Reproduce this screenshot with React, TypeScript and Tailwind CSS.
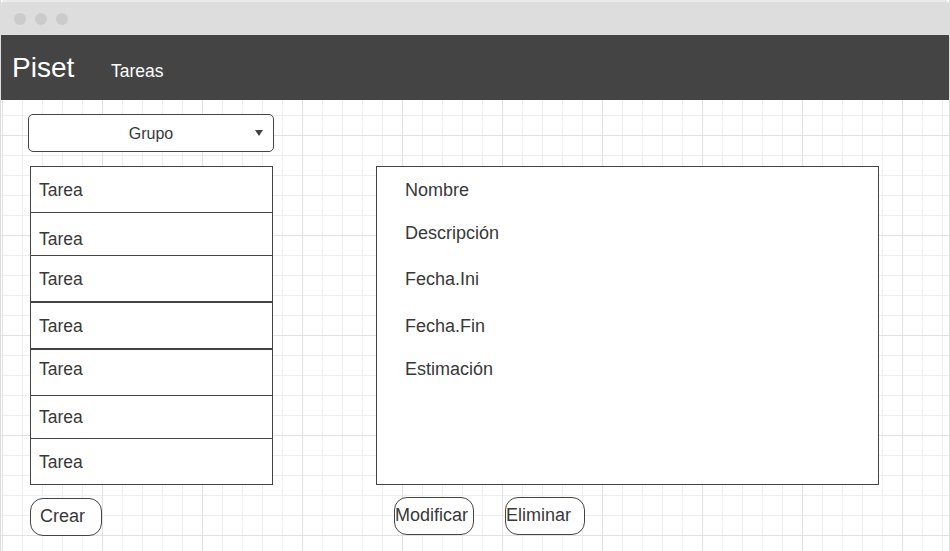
import { ChevronDown } from "lucide-react";

const rows = [
  { h: "h-[45px]", b: "", pad: "" },
  { h: "h-[43px]", b: "border-t", pad: "pt-[9px]" },
  { h: "h-[46px]", b: "border-t", pad: "" },
  { h: "h-[47px]", b: "border-t-2", pad: "" },
  { h: "h-[47px]", b: "border-t-2", pad: "pb-[8px]" },
  { h: "h-[43px]", b: "border-t", pad: "" },
  { h: "h-[46px]", b: "border-t", pad: "" },
];

const fields = [
  { label: "Nombre", mt: "mt-0" },
  { label: "Descripción", mt: "mt-[23px]" },
  { label: "Fecha.Ini", mt: "mt-[26px]" },
  { label: "Fecha.Fin", mt: "mt-[27px]" },
  { label: "Estimación", mt: "mt-[23px]" },
];

function WindowBar() {
  return (
    <div className="flex h-[35px] items-center gap-[9px] rounded-t-[4px] border-t-2 border-[#ebebeb] bg-[#dddddd] pl-[13px]">
      <span className="h-[12px] w-[12px] rounded-full bg-[#cbcbcb]" />
      <span className="h-[12px] w-[12px] rounded-full bg-[#cbcbcb]" />
      <span className="h-[12px] w-[12px] rounded-full bg-[#cbcbcb]" />
    </div>
  );
}

function Header() {
  return (
    <header className="flex h-[65px] items-center bg-[#444444] pl-[11px] text-white">
      <div className="flex items-baseline">
        <span className="inline-block w-[99px] text-[28px] leading-[32px]">Piset</span>
        <span className="text-[17.5px] leading-[20px]">Tareas</span>
      </div>
    </header>
  );
}

function GroupSelect() {
  return (
    <div className="relative flex h-[38px] w-[246px] items-center justify-center rounded-[5px] border border-[#444] bg-white pt-[2px]">
      <span className="text-[16px] leading-[18px] text-[#383838]">Grupo</span>
      {/* caret drawn as a small triangle */}
      <svg className="absolute right-[10px] top-[15px]" width="8" height="6" viewBox="0 0 8 6" aria-hidden>
        <path d="M0 0 H8 L4 6 Z" fill="#444" />
      </svg>
      <ChevronDown className="hidden" />
    </div>
  );
}

function TaskList() {
  return (
    <div className="ml-[2px] mt-[14px] w-[243px] border border-[#444] bg-white">
      {rows.map((r, i) => (
        <div
          key={i}
          className={`flex items-center border-[#444] pl-[8px] text-[17.5px] leading-[20px] text-[#383838] ${r.h} ${r.b} ${r.pad}`}
        >
          Tarea
        </div>
      ))}
    </div>
  );
}

function PillButton({ label, className }: { label: string; className: string }) {
  return (
    <button
      type="button"
      className={`flex h-[38px] items-center rounded-[13px] border border-[#444] bg-white text-[18px] leading-[20px] text-[#383838] ${className}`}
    >
      {label}
    </button>
  );
}

export default function App() {
  return (
    <div className="h-[551px] w-[950px] overflow-hidden border-x border-[#dddddd] bg-white font-['Liberation_Sans',Arial,sans-serif]">
      <WindowBar />
      <Header />
      <main className="flex h-[451px] bg-white bg-[linear-gradient(to_right,#e2e2e2_1px,transparent_1px),linear-gradient(to_bottom,#e2e2e2_1px,transparent_1px),linear-gradient(to_right,#eeeeee_1px,transparent_1px),linear-gradient(to_bottom,#eeeeee_1px,transparent_1px)] pl-[27px] pt-[14px] [background-position:1px_35px,1px_35px,1px_15px,1px_15px] [background-size:100px_100px,100px_100px,20px_20px,20px_20px]">
        <section className="flex flex-col">
          <GroupSelect />
          <TaskList />
          <PillButton label="Crear" className="ml-[2px] mt-[13px] w-[72px] pb-[3px] pl-[9px]" />
        </section>
        <section className="ml-[102px] mt-[52px] flex flex-col">
          <div className="flex h-[319px] w-[503px] flex-col border border-[#444] bg-white pl-[28px] pt-[13px] text-[18px] leading-[20px] text-[#383838]">
            {fields.map((f) => (
              <p key={f.label} className={f.mt}>
                {f.label}
              </p>
            ))}
          </div>
          <div className="ml-[18px] mt-[12px] flex gap-[31px]">
            <PillButton label="Modificar" className="h-[37px] w-[80px] pb-[2px] pl-0" />
            <PillButton label="Eliminar" className="h-[37px] w-[80px] pb-[2px] pl-0" />
          </div>
        </section>
      </main>
    </div>
  );
}
